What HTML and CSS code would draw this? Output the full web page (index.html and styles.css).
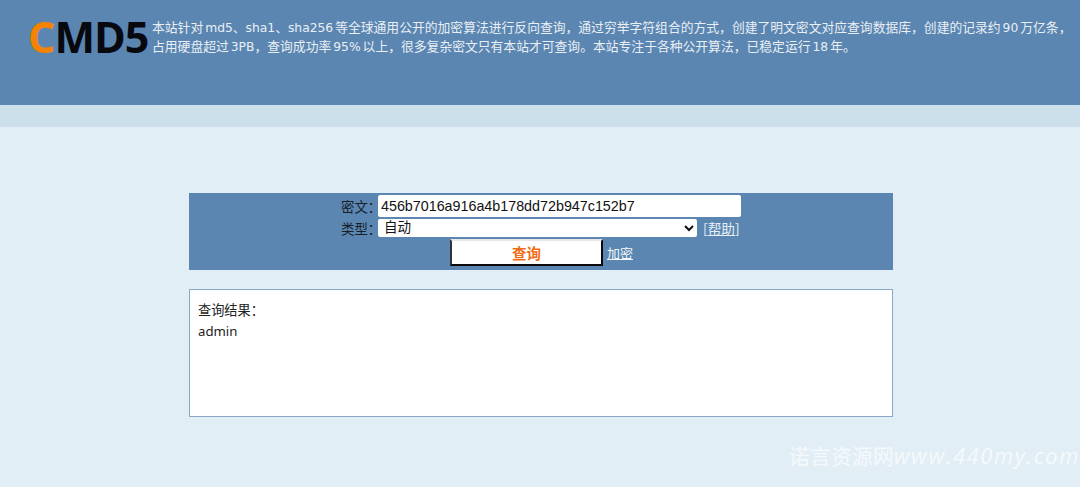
FILE: index.html
```html
<!DOCTYPE html>
<html lang="zh-CN">
<head>
<meta charset="utf-8">
<title>CMD5</title>
<link rel="stylesheet" href="styles.css">
</head>
<body>
<header class="header">
  <div class="logo"><span class="logo-c">C</span>MD5</div>
  <p class="intro"><span class="line">本站针对<span class="lat gl">md5</span>、<span class="lat">sha1</span>、<span class="lat gr">sha256</span>等全球通用公开的加密算法进行反向查询，通过穷举字符组合的方式，创建了明文密文对应查询数据库，创建的记录约<span class="lat gl gr">90</span>万亿条，</span><span class="line">占用硬盘超过<span class="lat gl">3PB</span>，查询成功率<span class="lat gl gr">95%</span>以上，很多复杂密文只有本站才可查询。本站专注于各种公开算法，已稳定运行<span class="lat gl gr">18</span>年。</span></p>
</header>
<div class="band"></div>
<main class="main">
  <form class="panel">
    <div class="row">
      <label class="label">密文：</label>
      <input class="cipher" type="text" value="456b7016a916a4b178dd72b947c152b7">
    </div>
    <div class="row row-type">
      <label class="label">类型：</label>
      <select class="type"><option>自动</option></select>
      <a class="help" href="#">[<u>帮助</u>]</a>
    </div>
    <div class="row row-actions">
      <button class="query" type="button">查询</button>
      <a class="encrypt" href="#">加密</a>
    </div>
  </form>
  <section class="result">
    <div>查询结果：</div>
    <div>admin</div>
  </section>
</main>
<div class="watermark"><span class="wm-cn">诺言资源网</span><span class="wm-en">www.440my.com</span></div>
</body>
</html>
```
FILE: styles.css
```css
* { box-sizing: border-box; }
html, body { margin: 0; height: 100%; }
body {
  background: #e1eef6;
  font-family: "DejaVu Sans", "Noto Sans CJK SC", sans-serif;
  overflow: hidden;
  position: relative;
}
.header {
  height: 105px;
  background: #5b86b1;
  display: flex;
  align-items: flex-start;
  padding: 11px 0 0 28px;
}
.logo {
  font-family: "Open Sans", sans-serif;
  font-weight: 700;
  font-size: 43px;
  line-height: 52px;
  color: #07090f;
  width: 124px;
  flex: none;
  letter-spacing: -1px;
}
.logo-c { color: #f58200; }
.intro {
  margin: 0;
  width: 925px;
  flex: none;
  color: #e9eff5;
  font-size: 12.8px;
  line-height: 18.5px;
  padding-top: 8px;
}
.line { display: block; white-space: nowrap; }
.lat { font-size: 12.3px; }
.gl { margin-left: 2px; }
.gr { margin-right: 2px; }
.band { height: 22px; background: #cce0ec; }
.main {
  width: 704px;
  margin: 66px auto 0;
  transform: translateX(1px);
}
.panel {
  height: 77px;
  background: #5b86b1;
  padding-top: 2px;
  display: flex;
  flex-direction: column;
  align-items: flex-start;
  padding-left: 152px;
}
.row { display: flex; align-items: center; height: 22px; }
.label {
  width: 37px;
  color: #17212b;
  white-space: nowrap;
  font: 13.4px "Noto Sans CJK SC", sans-serif;
}
.cipher {
  width: 363px;
  height: 22px;
  border: 0;
  border-radius: 2px;
  background: #fff;
  padding: 0 3px;
  font: 14.3px "Liberation Sans", sans-serif;
  color: #111;
}
.row-type { height: 19px; margin-top: 1px; }
.type {
  width: 319px;
  height: 18px;
  border: 0;
  border-radius: 2px;
  background: #fff;
  font: 13.5px "Liberation Sans", "Noto Sans CJK SC", sans-serif;
  color: #111;
  padding: 0 0 0 2px;
}
.help {
  color: #e6eef6;
  margin-left: 6px;
  font: 13.7px "Noto Sans CJK SC", sans-serif;
  text-decoration: none;
}
.row-actions { height: 28px; margin-left: 109px; margin-top: 1px; }
.query {
  width: 153px;
  height: 27px;
  background: #fff;
  border: 2px solid;
  border-color: #e8e8e8 #0a0a0a #0a0a0a #333;
  color: #f26c16;
  font: 700 14.5px "Noto Sans CJK SC", sans-serif;
  padding: 0;
}
.encrypt { color: #f2f6fa; margin-left: 4px; font: 13px "Noto Sans CJK SC", sans-serif; }
.result {
  margin-top: 19px;
  height: 128px;
  background: #fff;
  border: 1px solid #8aa9c9;
  padding: 10px 8px;
  font: 13.2px/21px "Noto Sans", "Noto Sans CJK SC", sans-serif;
  color: #222;
}
.watermark {
  position: absolute;
  right: 0;
  top: 440px;
  color: rgba(255, 255, 255, 0.7);
  line-height: 30px;
  white-space: nowrap;
  display: flex;
  align-items: baseline;
}
.wm-cn { font: 21px "Noto Sans CJK SC", sans-serif; }
.wm-en {
  font: italic 22px "Open Sans", sans-serif;
  letter-spacing: 1.6px;
}
```
